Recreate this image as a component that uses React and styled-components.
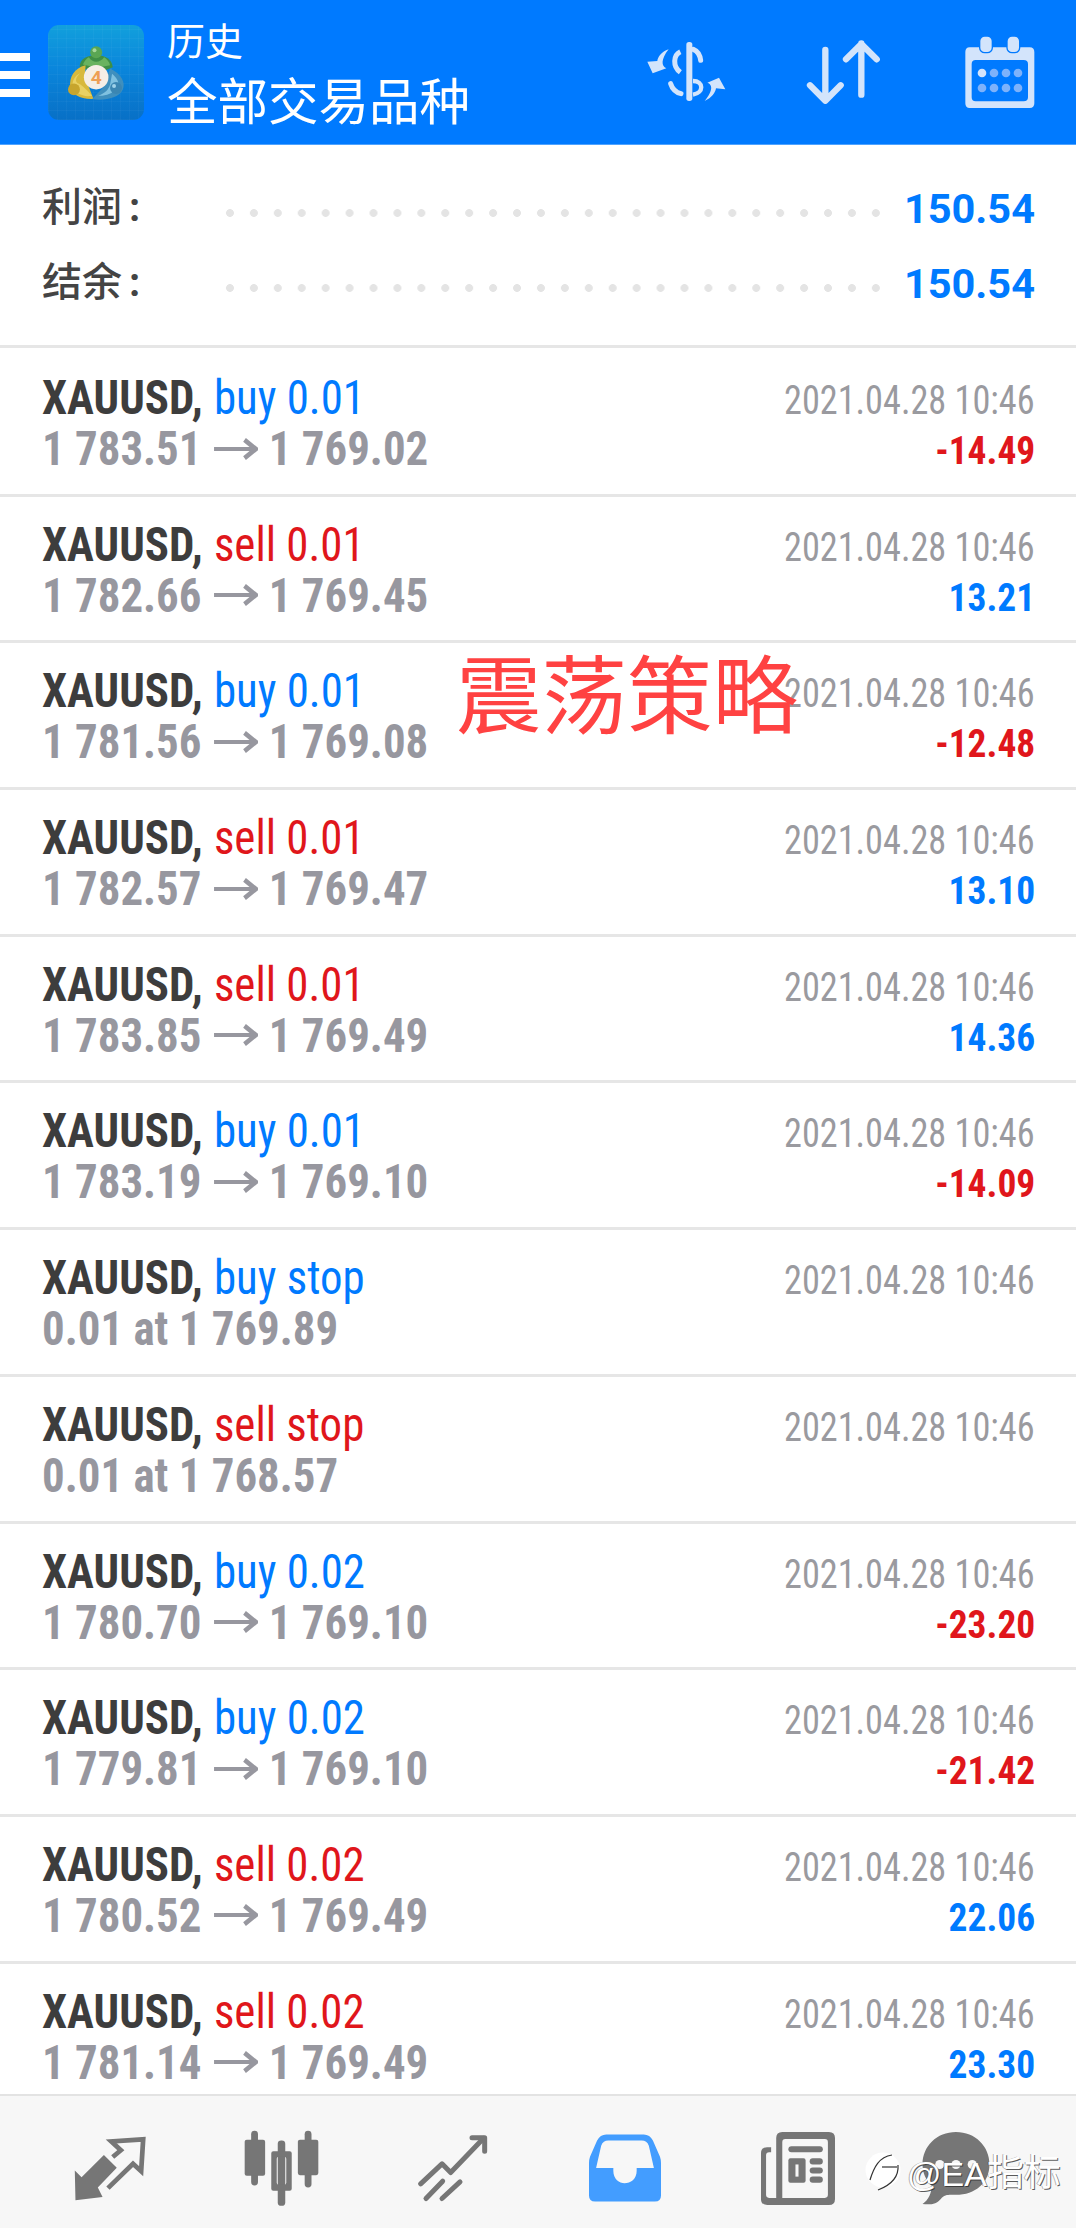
import React from 'react';
import styled, { createGlobalStyle } from 'styled-components';

const Global = createGlobalStyle`
  html, body { margin: 0; padding: 0; background: #fff; }
  #root { width: 1076px; }
`;

const deals = [
  { side: 'buy', label: 'buy 0.01', from: '1 783.51', to: '1 769.02', profit: '-14.49' },
  { side: 'sell', label: 'sell 0.01', from: '1 782.66', to: '1 769.45', profit: '13.21' },
  { side: 'buy', label: 'buy 0.01', from: '1 781.56', to: '1 769.08', profit: '-12.48' },
  { side: 'sell', label: 'sell 0.01', from: '1 782.57', to: '1 769.47', profit: '13.10' },
  { side: 'sell', label: 'sell 0.01', from: '1 783.85', to: '1 769.49', profit: '14.36' },
  { side: 'buy', label: 'buy 0.01', from: '1 783.19', to: '1 769.10', profit: '-14.09' },
  { side: 'buy', label: 'buy stop', order: '0.01 at 1 769.89' },
  { side: 'sell', label: 'sell stop', order: '0.01 at 1 768.57' },
  { side: 'buy', label: 'buy 0.02', from: '1 780.70', to: '1 769.10', profit: '-23.20' },
  { side: 'buy', label: 'buy 0.02', from: '1 779.81', to: '1 769.10', profit: '-21.42' },
  { side: 'sell', label: 'sell 0.02', from: '1 780.52', to: '1 769.49', profit: '22.06' },
  { side: 'sell', label: 'sell 0.02', from: '1 781.14', to: '1 769.49', profit: '23.30' },
];

const MenuIcon = () => (
  <Burger><i /><i /><i /></Burger>
);

const Logo = () => (
  <LogoBox>
    <svg width="62" height="58" viewBox="105 60 185 175">
      <path d="M148 128 C150 104 170 94 198 94 C226 94 246 106 248 130 L200 150Z" fill="#3f8f45" />
      <path d="M176 100 C186 118 210 118 222 100 C230 106 238 114 240 124 L200 132 L158 122 C162 112 168 104 176 100Z" fill="#69b35f" />
      <circle cx="198" cy="85" r="18" fill="#5aa653" />
      <circle cx="193" cy="79" r="6" fill="#a7d79a" />
      <path d="M166 124 C132 132 116 160 120 190 C124 212 150 228 190 226 L176 190 L164 160Z" fill="#d8b93c" />
      <path d="M150 148 C136 160 132 174 146 180 C158 186 170 200 186 216 C158 222 136 208 128 190 C124 170 134 156 150 148Z" fill="#e9d163" />
      <circle cx="131" cy="197" r="18" fill="#c7a52d" />
      <path d="M240 134 C274 150 288 178 278 198 C266 224 220 232 186 226 L222 188Z" fill="#3f8fbd" />
      <path d="M246 150 C262 164 270 178 262 192 C250 210 222 218 204 216 C226 208 236 196 240 182Z" fill="#7fc1e0" />
      <circle cx="258" cy="193" r="18" fill="#3b86b2" />
      <circle cx="252" cy="187" r="6" fill="#9fd2ea" />
      <circle cx="198" cy="160" r="37" fill="#f5eee6" />
      <text x="198" y="180" textAnchor="middle" fontFamily="Roboto, sans-serif" fontWeight="700" fontSize="58" fill="#ee9f55">4</text>
    </svg>
  </LogoBox>
);

const DollarIcon = () => (
  <svg width="79" height="62" viewBox="27 30 237 186">
    <g fill="#d3e4fb">
      <rect x="145" y="33" width="18" height="177" rx="8" />
      <path d="M92 55 C70 62 60 78 58 90 L28 92 L44 127 L85 112 C70 106 68 85 92 55Z" />
      <path d="M200 210 C222 200 232 185 234 172 L262 175 L243 140 L208 155 C222 160 228 175 200 210Z" />
    </g>
    <g fill="none" stroke="#d3e4fb" strokeWidth="15">
      <path d="M166 55 C178 60 186 72 188 88" strokeLinecap="round" />
      <path d="M127 62 C106 72 103 106 127 124" />
      <path d="M98 158 C103 174 114 184 129 188" strokeLinecap="round" />
      <path d="M165 150 C198 150 198 186 165 191" strokeWidth="13" />
    </g>
  </svg>
);

const SortIcon = () => (
  <svg width="74" height="64" viewBox="620 120 222 192" fill="none" stroke="#d3e4fb" strokeWidth="19" strokeLinecap="round" strokeLinejoin="round">
    <path d="M678 150 V300 M632 256 L678 302 L724 256" />
    <path d="M786 284 V130 M740 178 L786 132 L832 178" />
  </svg>
);

const CalendarIcon = () => (
  <svg width="70" height="72" viewBox="1096 106 210 216">
    <path fillRule="evenodd" fill="#d3e4fb" d="M1110 140 H1290 Q1304 140 1304 154 V308 Q1304 322 1290 322 H1110 Q1097 322 1097 308 V154 Q1097 140 1110 140Z M1128 178 Q1116 178 1116 190 V290 Q1116 302 1128 302 H1272 Q1285 302 1285 290 V190 Q1285 178 1272 178Z" />
    <rect x="1140" y="106" width="38" height="50" rx="15" fill="#d3e4fb" stroke="#007aff" strokeWidth="4" />
    <rect x="1222" y="106" width="38" height="50" rx="15" fill="#d3e4fb" stroke="#007aff" strokeWidth="4" />
    <circle cx="1147" cy="217" r="13" fill="#d3e4fb" />
    {[1183, 1219, 1255].map(x => <circle key={x} cx={x} cy="217" r="13" fill="#7db2fb" />)}
    {[1147, 1183, 1219, 1255].map(x => <circle key={x} cx={x} cy="262" r="13" fill="#7db2fb" />)}
  </svg>
);

const PriceArrow = () => (
  <ArrowSvg width="49" height="22" viewBox="0 0 49 22" fill="none" stroke="#97979f" strokeWidth="4">
    <path d="M0 11 H46" />
    <path d="M34 1.5 L46.5 11 L34 20.5" strokeWidth="5" />
  </ArrowSvg>
);

const TradeIcon = () => (
  <svg width="72" height="65" viewBox="212 164 212 192">
    <path fill="#767676" d="M300 220 L338 258 L282 316 L296 344 L216 354 L214 266 L234 286Z" />
    <path fill="none" stroke="#767676" strokeWidth="14" strokeLinejoin="miter" d="M326 226 L350 206 L322 180 L416 174 L410 268 L386 246 L312 318" />
  </svg>
);

const CandleIcon = () => (
  <svg width="75" height="76" viewBox="706 146 220 222">
    <g fill="#767676">
      <rect x="727" y="148" width="20" height="160" rx="10" />
      <rect x="708" y="174" width="60" height="106" rx="6" />
      <rect x="884" y="148" width="20" height="166" rx="10" />
      <rect x="864" y="174" width="60" height="104" rx="6" />
      <rect x="805" y="176" width="22" height="192" rx="10" />
    </g>
    <path fillRule="evenodd" fill="#767676" d="M792 208 H840 Q846 208 846 214 V318 Q846 324 840 324 H792 Q786 324 786 318 V214 Q786 208 792 208Z M808 224 Q802 224 802 230 V300 Q802 306 808 306 H824 Q830 306 830 300 V230 Q830 224 824 224Z" />
  </svg>
);

const ChartIcon = () => (
  <svg width="70" height="69" viewBox="1210 154 210 204" fill="none" stroke="#767676" strokeWidth="15" strokeLinecap="round" strokeLinejoin="round">
    <path d="M1218 302 L1282 242 L1308 268 L1406 166" />
    <path d="M1372 164 H1410 V204" />
    <path d="M1234 346 L1284 294" />
    <path d="M1282 346 L1336 296" />
  </svg>
);

const InboxIcon = () => (
  <svg width="72" height="68" viewBox="0 0 71 66">
    <path fillRule="evenodd" fill="#439dff" d="M17 0 H54 Q60 0 63 6 L70 22 Q71 25 71 28 V60 Q71 66 65 66 H6 Q0 66 0 60 V28 Q0 25 1 22 L8 6 Q11 0 17 0Z M19 6 Q14 6 12 11 L7 33 H24 V36 C24 44 30 48 35 48 C41 48 47 44 47 36 V33 H64 L59 11 Q57 6 52 6Z" />
  </svg>
);

const NewsIcon = () => (
  <svg width="76" height="73" viewBox="0 0 73 72">
    <path fillRule="evenodd" fill="#767676" d="M21 0 H67 Q73 0 73 6 V66 Q73 72 67 72 H6 Q0 72 0 66 V21 Q0 15 6 15 H10 V20 H8 Q5 20 5 23 V62 Q5 65 8 65 H15 V6 Q15 0 21 0Z M24 7 Q21 7 21 10 V65 H63 Q66 65 66 62 V10 Q66 7 63 7Z" />
    <g fill="#767676">
      <rect x="27" y="14" width="34" height="6" rx="3" />
      <rect x="27" y="26" width="17" height="24" rx="2" />
      <rect x="48" y="26" width="13" height="6" rx="3" />
      <rect x="48" y="35" width="13" height="6" rx="3" />
      <rect x="48" y="44" width="13" height="6" rx="3" />
    </g>
    <rect x="34" y="32" width="3" height="12" fill="#f7f7f7" />
  </svg>
);

const ChatIcon = () => (
  <svg width="70" height="73" viewBox="0 0 66 72">
    <path fill="#767676" d="M33 0 C52 0 66 14 66 32 C66 50 52 62 33 62 C27 62 22 61 18 66 C14 71 8 72 0 71 C6 67 9 60 9 53 C3 47 0 40 0 32 C0 14 14 0 33 0Z" />
    {[17, 33, 49].map(x => <circle key={x} cx={x} cy="32" r="4.5" fill="#f7f7f7" />)}
  </svg>
);

const WeiboMark = () => (
  <svg width="38" height="50" viewBox="0 0 38 50" fill="none" stroke="#333" strokeWidth="1.2">
    <circle cx="18" cy="25" r="17.5" fill="#fff" stroke="none" />
    <path d="M5 35 C9 22 14 12 27 10" />
    <path d="M17 22 H32" />
    <path d="M33 20 C34 32 26 40 13 45" />
  </svg>
);

const App = () => (
  <Screen>
    <Global />
    <Header>
      <MenuIcon />
      <Logo />
      <Titles>
        <SmallTitle>历史</SmallTitle>
        <BigTitle>全部交易品种</BigTitle>
      </Titles>
      <HeaderActions>
        <DollarIcon />
        <ActionSlot $gap={80}><SortIcon /></ActionSlot>
        <ActionSlot $gap={85}><CalendarIcon /></ActionSlot>
      </HeaderActions>
    </Header>

    <Summary>
      <SummaryRow>
        <SummaryLabel>利润<Colon>:</Colon></SummaryLabel>
        <Leader />
        <SummaryValue>150.54</SummaryValue>
      </SummaryRow>
      <SummaryRow>
        <SummaryLabel>结余<Colon>:</Colon></SummaryLabel>
        <Leader />
        <SummaryValue>150.54</SummaryValue>
      </SummaryRow>
    </Summary>

    <List>
      {deals.map((d, i) => (
        <Row key={i}>
          <LeftCol>
            <TitleLine>
              <Symbol>XAUUSD,</Symbol>
              <Side $side={d.side}>{d.label}</Side>
            </TitleLine>
            <PriceLine>
              {d.order ? d.order : (
                <>
                  {d.from}
                  <PriceArrow />
                  {d.to}
                </>
              )}
            </PriceLine>
          </LeftCol>
          <RightCol>
            <DateText>2021.04.28 10:46</DateText>
            {d.profit && <Profit $loss={d.profit[0] === '-'}>{d.profit}</Profit>}
          </RightCol>
        </Row>
      ))}
    </List>

    <Nav>
      <NavItem $gap={74}><TradeIcon /></NavItem>
      <NavItem $gap={98}><CandleIcon /></NavItem>
      <NavItem $gap={99}><ChartIcon /></NavItem>
      <NavItem $gap={101}><InboxIcon /></NavItem>
      <NavItem $gap={99}><NewsIcon /></NavItem>
      <NavItem $gap={85}><ChatIcon /></NavItem>
      <Watermark>
        <WeiboMark />
        <span>@EA<WatermarkCjk>指标</WatermarkCjk></span>
      </Watermark>
    </Nav>

    <Stamp>震荡策略</Stamp>
  </Screen>
);

export default App;

const Screen = styled.div`
  position: relative;
  width: 1076px;
  height: 2228px;
  display: flex;
  flex-direction: column;
  overflow: hidden;
  background: #fff;
  font-family: Roboto, "Noto Sans CJK SC", sans-serif;
`;

const Header = styled.header`
  flex: none;
  height: 144px;
  display: flex;
  align-items: center;
  background: #007aff;
  color: #fff;
  border-bottom: 1px solid #4fa3ff;
  box-sizing: content-box;
`;

const Burger = styled.div`
  width: 30px;
  display: flex;
  flex-direction: column;
  gap: 10px;
  margin: 6px 18px 0 0;
  i {
    display: block;
    height: 8px;
    background: #fff;
  }
`;

const LogoBox = styled.div`
  width: 96px;
  height: 95px;
  margin-top: 1px;
  border-radius: 11px;
  display: flex;
  align-items: center;
  justify-content: center;
  background:
    repeating-linear-gradient(0deg, rgba(255, 255, 255, 0.03) 0 1px, transparent 1px 9px),
    repeating-linear-gradient(90deg, rgba(255, 255, 255, 0.03) 0 1px, transparent 1px 9px),
    linear-gradient(180deg, #12a0dc 0%, #0a86dc 45%, #0870c6 100%);
`;

const Titles = styled.div`
  margin: 2px 0 0 23px;
  display: flex;
  flex-direction: column;
  gap: 6px;
`;

const SmallTitle = styled.div`
  font-size: 38px;
  line-height: 44px;
  font-family: "Noto Sans CJK SC", sans-serif;
`;

const BigTitle = styled.div`
  font-size: 50.5px;
  line-height: 62px;
  font-family: "Noto Sans CJK SC", sans-serif;
`;

const HeaderActions = styled.div`
  margin-left: auto;
  padding-right: 41px;
  display: flex;
  align-items: center;
`;

const ActionSlot = styled.div`
  display: flex;
  margin-left: ${p => p.$gap}px;
`;

const Summary = styled.section`
  flex: none;
  height: 200px;
  box-sizing: border-box;
  padding-top: 26px;
  display: flex;
  flex-direction: column;
`;

const SummaryRow = styled.div`
  height: 75px;
  padding: 0 41px 0 42px;
  display: flex;
  align-items: center;
`;

const SummaryLabel = styled.div`
  width: 176px;
  margin-top: -5px;
  font-size: 40px;
  line-height: 50px;
  font-weight: 500;
  color: #444;
  font-family: "Noto Sans CJK SC", sans-serif;
  white-space: nowrap;
`;

const Colon = styled.span`
  font-family: Roboto, sans-serif;
  font-weight: 700;
  margin-left: 7px;
`;

const Leader = styled.div`
  flex: 1;
  height: 8px;
  margin-top: 9px;
  background-image: radial-gradient(circle, #e4e4e4 3.6px, transparent 4.2px);
  background-size: 23.93px 8px;
  background-repeat: repeat-x;
`;

const SummaryValue = styled.div`
  width: 147px;
  margin-top: -1px;
  text-align: right;
  font-size: 41.5px;
  font-weight: 700;
  color: #007aff;
  white-space: nowrap;
`;

const List = styled.div`
  flex: 1;
  min-height: 0;
  overflow: hidden;
  padding-top: 2px;
  border-top: 3px solid #e6e6e6;
`;

const Row = styled.div`
  height: 146.7px;
  box-sizing: border-box;
  padding: 22px 41px 0 42px;
  display: flex;
  justify-content: space-between;
  border-bottom: 3px solid #e6e6e6;
`;

const LeftCol = styled.div`
  transform: scaleX(0.935);
  transform-origin: left center;
`;

const TitleLine = styled.div`
  display: flex;
  gap: 12px;
  font-size: 48px;
  line-height: 51px;
  font-stretch: 75%;
`;

const Symbol = styled.span`
  font-weight: 700;
  color: #3d3d3d;
`;

const Side = styled.span`
  color: ${p => (p.$side === 'buy' ? '#007aff' : '#e0161b')};
`;

const PriceLine = styled.div`
  display: flex;
  align-items: center;
  font-size: 48px;
  line-height: 51px;
  font-weight: 700;
  color: #97979f;
  white-space: pre;
  font-stretch: 75%;
`;

const ArrowSvg = styled.svg`
  margin: 0 12px 0 13px;
  width: 47px;
`;

const RightCol = styled.div`
  display: flex;
  flex-direction: column;
  align-items: flex-end;
  padding-top: 7px;
`;

const DateText = styled.div`
  font-size: 40px;
  line-height: 44px;
  color: #9a9a9f;
  font-stretch: 75%;
  transform: scaleX(0.906);
  transform-origin: right center;
  white-space: nowrap;
`;

const Profit = styled.div`
  font-size: 39px;
  line-height: 44px;
  margin-top: 6px;
  font-weight: 700;
  color: ${p => (p.$loss ? '#e0161b' : '#007aff')};
  font-stretch: 75%;
  transform: scaleX(0.96);
  transform-origin: right center;
`;

const Nav = styled.nav`
  position: absolute;
  left: 0;
  right: 0;
  bottom: 0;
  height: 134px;
  box-sizing: border-box;
  padding-top: 12px;
  display: flex;
  align-items: center;
  background: #f7f7f7;
  border-top: 2px solid #e3e3e3;
`;

const NavItem = styled.div`
  margin-left: ${p => p.$gap}px;
  display: flex;
  align-items: center;
`;

const Watermark = styled.div`
  position: absolute;
  left: 865px;
  top: 47px;
  display: flex;
  align-items: center;
  gap: 4px;
  color: #fff;
  font-size: 34px;
  font-family: "Liberation Sans", "Noto Sans CJK SC", sans-serif;
  text-shadow: 1px 1px 0 rgba(40, 40, 40, 0.75), -1px 0 0 rgba(40, 40, 40, 0.35);
  white-space: nowrap;
`;

const WatermarkCjk = styled.span`
  font-size: 37px;
  font-family: "Noto Sans CJK SC", sans-serif;
`;

const Stamp = styled.div`
  position: absolute;
  left: 456px;
  top: 640px;
  font-size: 85.5px;
  line-height: 100px;
  color: #ff4242;
  font-family: "Noto Sans CJK SC", sans-serif;
  white-space: nowrap;
`;
